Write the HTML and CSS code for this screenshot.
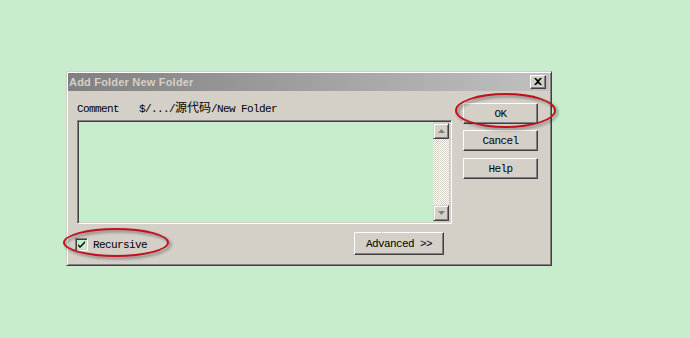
FILE: index.html
```html
<!DOCTYPE html>
<html>
<head>
<meta charset="utf-8">
<link rel="stylesheet" href="styles.css">
</head>
<body>
<div class="dialog">
  <div class="titlebar">
    <span class="title">Add Folder New Folder</span>
    <div class="close">
      <svg width="8" height="7" viewBox="0 0 8 7"><path d="M0 0h2l2 2 2-2h2L5 3.5 8 7H6L4 5 2 7H0l3-3.5z" fill="#000"/></svg>
    </div>
  </div>
  <div class="content">
    <div class="left">
      <div class="label-row">
        <span class="lbl">Comment</span>
        <span class="path">$/.../<span class="cjk">源代码</span>/New Folder</span>
      </div>
      <div class="edit">
        <div class="edit-area"></div>
        <div class="scroll">
          <div class="sbtn"><svg width="7" height="4" viewBox="0 0 7 4"><path d="M3.5 0L7 4H0z" fill="#808080"/></svg></div>
          <div class="track"></div>
          <div class="sbtn"><svg width="7" height="4" viewBox="0 0 7 4"><path d="M0 0h7L3.5 4z" fill="#808080"/></svg></div>
        </div>
      </div>
      <div class="bottom-row">
        <label class="check">
          <span class="box"><svg width="9" height="9" viewBox="0 0 9 9"><path d="M1 4l2 2 5-5v2L3 8 1 6z" fill="#000"/></svg></span>
          <span>Recursive</span>
        </label>
        <div class="btn adv">Advanced &gt;&gt;</div>
      </div>
    </div>
    <div class="right">
      <div class="btn">OK</div>
      <div class="btn">Cancel</div>
      <div class="btn">Help</div>
    </div>
  </div>
</div>
<div class="ring ring-ok"></div>
<div class="ring ring-rec"></div>
</body>
</html>
```

FILE: styles.css
```css
html, body {
  margin: 0;
  padding: 0;
}
body {
  background: #c7edcc;
  width: 690px;
  height: 338px;
  position: relative;
  overflow: hidden;
  font-family: "Liberation Mono", "Noto Sans CJK SC", monospace;
  font-size: 11px;
  letter-spacing: -0.6px;
  color: #000;
}
.dialog {
  margin: 71px 0 0 66px;
  width: 486px;
  height: 195px;
  box-sizing: border-box;
  background: #d4d0c8;
  border: 1px solid;
  border-color: #d4d0c8 #404040 #404040 #d4d0c8;
  box-shadow: inset 1px 1px #fff, inset -1px -1px #808080;
  padding: 1px 2px 2px 1px;
}
.titlebar {
  height: 18px;
  background: linear-gradient(to right, #808080, #c0c0c0);
  display: flex;
  align-items: center;
  justify-content: space-between;
  padding: 0 3px 0 1px;
}
.title {
  font-family: "Liberation Sans", Arial, sans-serif;
  font-weight: bold;
  font-size: 11px;
  letter-spacing: 0.2px;
  color: #d4d0c8;
}
.close {
  width: 16px;
  height: 14px;
  box-sizing: border-box;
  background: #d4d0c8;
  border: 1px solid;
  border-color: #fff #404040 #404040 #fff;
  box-shadow: inset -1px -1px #808080;
  display: flex;
  align-items: center;
  justify-content: center;
  padding-bottom: 1px;
}
.content {
  display: flex;
  padding: 11px 0 0 9px;
  gap: 11px;
}
.left {
  width: 375px;
}
.label-row {
  display: flex;
  height: 12px;
  line-height: 12px;
  margin-top: 1px;
}
.lbl {
  width: 62px;
}
.cjk {
  font-size: 12px;
  letter-spacing: 0;
}
.edit {
  margin-top: 5px;
  width: 375px;
  height: 104px;
  box-sizing: border-box;
  border: 1px solid;
  border-color: #808080 #fff #fff #808080;
  box-shadow: inset 1px 1px #404040, inset -1px -1px #d4d0c8;
  padding: 2px;
  display: flex;
}
.edit-area {
  flex: 1;
  background: #c7edcc;
  margin: -1px 0 -1px -1px;
}
.scroll {
  width: 16px;
  display: flex;
  flex-direction: column;
}
.track {
  flex: 1;
  background: repeating-conic-gradient(#fff 0 25%, #d4d0c8 0 50%) 0 0 / 2px 2px;
}
.sbtn {
  height: 16px;
  box-sizing: border-box;
  background: #d4d0c8;
  border: 1px solid;
  border-color: #d4d0c8 #404040 #404040 #d4d0c8;
  box-shadow: inset 1px 1px #fff, inset -1px -1px #808080;
  display: flex;
  align-items: center;
  justify-content: center;
}
.bottom-row {
  display: flex;
  align-items: center;
  justify-content: space-between;
  margin-top: 8px;
  margin-left: -2px;
  width: 369px;
}
.check {
  display: flex;
  align-items: center;
  gap: 5px;
  line-height: 12px;
  margin-top: 2px;
}
.box {
  width: 13px;
  height: 13px;
  box-sizing: border-box;
  border: 1px solid;
  border-color: #808080 #fff #fff #808080;
  box-shadow: inset 1px 1px #404040, inset -1px -1px #d4d0c8;
  background: #c7edcc;
  display: flex;
  align-items: center;
  justify-content: center;
}
.btn {
  width: 75px;
  height: 21px;
  box-sizing: border-box;
  background: #d4d0c8;
  border: 1px solid;
  border-color: #fff #404040 #404040 #fff;
  box-shadow: inset -1px -1px #808080;
  display: flex;
  align-items: center;
  justify-content: center;
}
.adv {
  width: 90px;
  height: 23px;
}
.right {
  display: flex;
  flex-direction: column;
  gap: 6px;
  margin-top: 1px;
}
.right .btn:last-child {
  margin-top: 1px;
}
.ring {
  position: absolute;
  border: 2px solid #c4101c;
  border-radius: 50%;
  box-sizing: border-box;
  filter: drop-shadow(2px 2px 1.5px rgba(0, 0, 0, 0.45));
}
.ring-ok {
  left: 455px;
  top: 93px;
  width: 101px;
  height: 35px;
}
.ring-rec {
  left: 63px;
  top: 228px;
  width: 106px;
  height: 29px;
}
```
